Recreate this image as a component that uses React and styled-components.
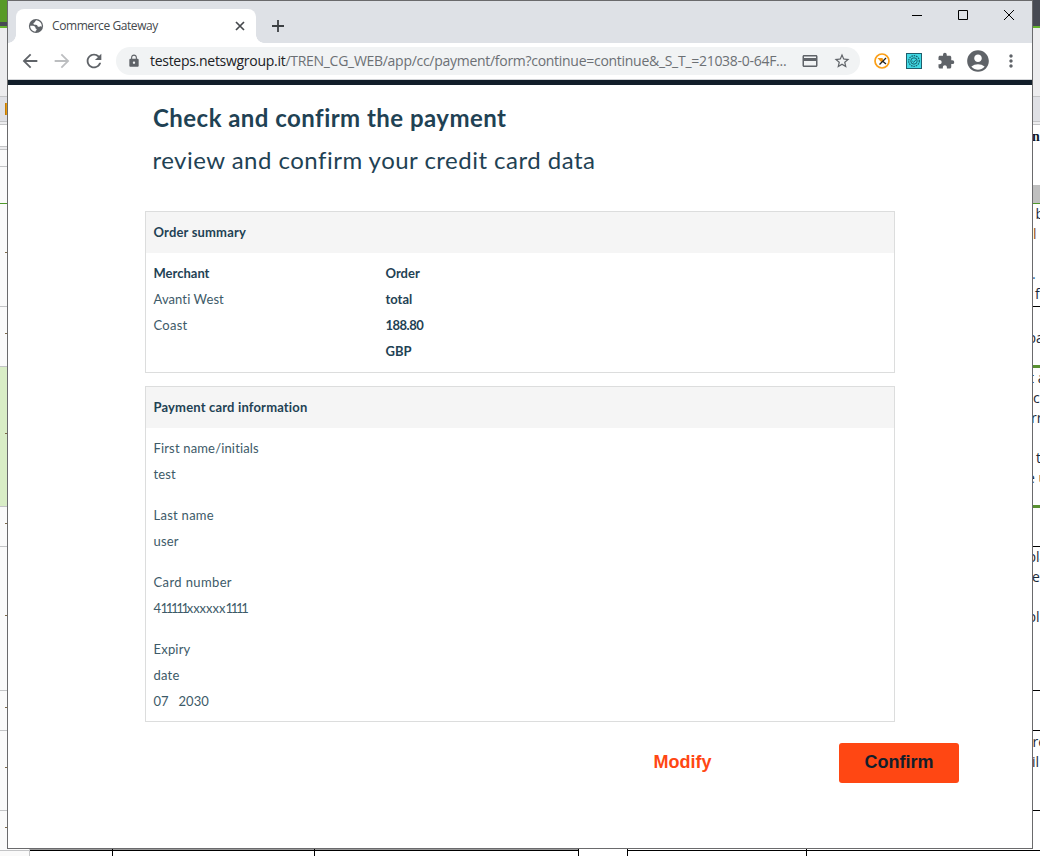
import React from "react";
import styled, { createGlobalStyle } from "styled-components";
import {
  MdArrowBack, MdArrowForward, MdRefresh, MdLock, MdOutlineCreditCard,
  MdStarBorder, MdExtension, MdAccountCircle, MdMoreVert,
} from "react-icons/md";

const GlobalStyle = createGlobalStyle`
  * { box-sizing: border-box; }
  body { margin: 0; background: #fff; overflow: hidden; }
  svg { display: block; flex: none; }
`;

const ui = `"Open Sans", "Noto Sans", sans-serif`;

const Desktop = styled.div`
  display: grid;
  grid-template-columns: 7px 1026px 7px;
  grid-template-rows: 849px 7px;
  width: 1040px;
  height: 856px;
  overflow: hidden;
`;

/* Spreadsheet behind the window */
const Strip = styled.div`
  display: flex;
  flex-direction: column;
  overflow: hidden;
`;
const Cell = styled.div`
  flex: none;
  height: ${(p) => p.$h}px;
  background: ${(p) => p.$bg || "#fff"};
  border-bottom: ${(p) => p.$line || "0 solid"};
  padding-top: ${(p) => p.$pt || 0}px;
  overflow: hidden;
`;
const CellLine = styled.div`
  height: 20px;
  font: ${(p) => p.$font || `14px/20px ${ui}`};
  color: ${(p) => p.$c || "#1b2a38"};
  white-space: pre;
  text-indent: ${(p) => p.$dx || 0}px;
`;
const Tick = styled.div`
  width: 2px;
  height: 1px;
  margin-left: 5px;
  background: #7d6a4a;
`;
const Flag = styled.div`
  width: 2px;
  height: 12px;
  margin-left: 5px;
  background: #e69a10;
  border-left: 1px solid #c27b05;
`;
const BottomRow = styled.div`
  grid-column: 1 / -1;
  display: flex;
  height: 7px;
`;
const BottomCell = styled.div`
  width: ${(p) => p.$w}px;
  flex: none;
  border-right: ${(p) => p.$edge || "1px solid #000"};
  background: linear-gradient(${(p) => p.$top || "#fff"} 1px, ${(p) => p.$line || "#000"} 1px 2px, ${(p) => p.$bg || "#fff"} 2px);
`;

/* Browser window */
const Window = styled.div`
  display: flex;
  flex-direction: column;
  border: 1px solid #6a6a6c;
  background: #fff;
`;
const TabStrip = styled.div`
  display: flex;
  height: 42px;
  padding: 8px 0 0;
  background: #dee1e6;
`;
const TabFoot = styled.div`
  width: 8px;
  height: 34px;
  background: ${(p) =>
    `radial-gradient(circle at ${p.$side === "left" ? "0 0" : "100% 0"}, transparent 7.5px, #fff 8px) 0 100% / 8px 8px no-repeat`};
`;
const Tab = styled.div`
  display: flex;
  align-items: center;
  width: 240px;
  height: 34px;
  padding: 0 10px 0 12px;
  border-radius: 8px 8px 0 0;
  background: #fff;
  color: #5f6368;
`;
const TabTitle = styled.span`
  flex: 1;
  margin-left: 8px;
  font: 12px/16px ${ui};
  letter-spacing: -0.42px;
  color: #45494d;
`;
const NewTab = styled.div`
  padding: 11px 0 0 8px;
`;
const WindowButtons = styled.div`
  display: flex;
  margin-left: auto;
  padding-right: 17px;
  gap: 35px;
`;
const Toolbar = styled.div`
  display: flex;
  align-items: center;
  height: 36px;
  padding: 0 11px 0 11px;
  background: #fff;
  color: #5f6368;
`;
const NavButton = styled.div`
  width: 22px;
  margin-right: 10px;
  color: ${(p) => (p.$off ? "#bcbec0" : "#5f6368")};
`;
const Address = styled.div`
  display: flex;
  align-items: center;
  width: 744px;
  height: 28px;
  margin-left: 1px;
  padding: 0 9px 0 11px;
  border-radius: 14px;
  background: #f1f3f4;
`;
const Url = styled.div`
  flex: 1;
  margin-left: 9px;
  white-space: nowrap;
  font: 14px/20px ${ui};
  letter-spacing: -0.285px;
  color: #6c7074;
  b { font-weight: 400; color: #202124; }
`;
const AddressIcons = styled.div`
  display: flex;
  gap: 14px;
`;
const Extensions = styled.div`
  display: flex;
  align-items: center;
  margin-left: 14px;
`;
const Slot = styled.div`
  margin-right: ${(p) => p.$mr || 0}px;
`;
const SiteBar = styled.div`
  height: 6px;
  border-top: 1px solid #d3d5d8;
  background: #121e2a;
`;

/* Payment page */
const Page = styled.main`
  flex: 1;
  padding: 16px 73px 0 137px;
  font-family: Lato, sans-serif;
  color: #1f4254;
`;
const Title = styled.h1`
  margin: 0 0 0 8px;
  font-size: 24px;
  line-height: 34px;
  font-weight: 700;
  letter-spacing: 0.46px;
`;
const Subtitle = styled.h2`
  margin: 8px 0 34px 7.5px;
  font-size: 24px;
  line-height: 34px;
  font-weight: 400;
  letter-spacing: 0.48px;
`;
const Panel = styled.section`
  width: 750px;
  height: ${(p) => p.$h}px;
  margin-bottom: 13px;
  border: 1px solid #dcdddd;
`;
const PanelHead = styled.h3`
  margin: 0;
  padding: 0 7.5px;
  height: 41px;
  background: #f5f5f5;
  font-size: 13px;
  line-height: 40px;
  font-weight: 700;
  letter-spacing: 0.17px;
`;
const Columns = styled.div`
  display: grid;
  grid-template-columns: 232px 1fr;
  padding: 7px 7.5px 0;
`;
const Fields = styled.div`
  display: flex;
  flex-direction: column;
  gap: 15px;
  padding: 7px 7.5px 0;
`;
const Line = styled.div`
  height: 26px;
  font-size: 13px;
  line-height: 26px;
  font-weight: ${(p) => (p.$bold ? 700 : 400)};
  letter-spacing: ${(p) => p.$ls || 0}px;
  color: ${(p) => (p.$bold ? "#1f4254" : "#3d5a68")};
  white-space: pre;
`;
const Run = styled.span`
  letter-spacing: ${(p) => p.$ls}px;
`;
const Actions = styled.div`
  display: flex;
  justify-content: flex-end;
  align-items: center;
  margin-top: 21px;
`;
const ActionButton = styled.button`
  width: 120px;
  height: 40px;
  padding: 0 0 2px;
  border: 0;
  border-radius: 3px;
  font: 700 18px/24px "Liberation Sans", Arial, sans-serif;
  background: ${(p) => (p.$primary ? "#ff4713" : "transparent")};
  color: ${(p) => (p.$primary ? "#121e2a" : "#ff4713")};
  margin-left: ${(p) => (p.$primary ? 96.5 : 0)}px;
`;

const GRAY = "1px solid #c3c4c6";
const BLACK = "1px solid #000";
const GREEN = "1px solid #4f9a2a";

const leftCells = [
  { h: 22, bg: "#589a27" },
  { h: 4, bg: "#474a53" },
  { h: 2, bg: "#65b32e" },
  { h: 69, bg: "#ececee", line: GRAY },
  { h: 25, bg: "#dfe0e5", line: GRAY, pt: 6, flag: true },
  { h: 3, bg: "#ececee", line: GRAY },
  { h: 22, line: GRAY },
  { h: 3, bg: "#ececee", line: GRAY },
  { h: 17, bg: "#fafafa", line: GRAY },
  { h: 37, bg: "#fafafa", line: GREEN },
  { h: 103, bg: "#fafafa", line: GRAY, pt: 48, tick: true },
  { h: 60, bg: "#fafafa", line: GRAY, pt: 26, tick: true },
  { h: 140, bg: "#d9edc6", line: GRAY, pt: 66, tick: true },
  { h: 40, bg: "#fafafa", line: GRAY, pt: 16, tick: true },
  { h: 144, bg: "#fafafa", line: GRAY, pt: 68, tick: true },
  { h: 40, bg: "#fafafa", line: GRAY, pt: 16, tick: true },
  { h: 80, bg: "#fafafa", line: GRAY, pt: 36, tick: true },
  { h: 38, bg: "#fafafa", pt: 16, tick: true },
];

const brown = "#8a4a16";
const rightCells = [
  { h: 26, bg: "#474a53" },
  { h: 2, bg: "#65b32e" },
  { h: 69, bg: "#ececee", line: GRAY },
  { h: 25, bg: "#dfe0e5", line: GRAY },
  { h: 3, bg: "#ececee", line: GRAY },
  { h: 60, pt: 2, lines: [["n", -1, "#101828", `700 14px/20px "Liberation Serif", serif`]] },
  { h: 19, bg: "#bfbfbf", line: GREEN },
  { h: 103, line: BLACK, lines: [["b", 2.5], ["l", 0, brown], [""], [".", -1, "#1f6296"], ["f", 2]] },
  { h: 58, pt: 21, lines: [["pa", -5.5]] },
  { h: 3, bg: "#5a9132" },
  { h: 137, lines: [["t a", -4], ["ic", -3.5], ["rr", -2], [""], ["t", 3], ["e u", -6]] },
  { h: 3, bg: "#5a9132" },
  { h: 39, line: BLACK },
  { h: 144, line: BLACK, lines: [["pla", -5.5], ["e", -1], [""], ["pl", -5.5]] },
  { h: 40, line: BLACK },
  { h: 80, line: BLACK, pt: 1, lines: [["re", -0.5], ["il", -1]] },
  { h: 38 },
];

/* each value is a list of runs: [text, letter spacing] */
const fields = [
  [[["First name/initials", 0.16]], [["test", 0.1]]],
  [[["Last name", 0.27]], [["user", 0.2]]],
  [[["Card number", 0.38]], [["4", -0.6], ["11111", -2.3], ["xxxxxx", 0], ["1111", -2.3]]],
  [[["Expiry", 0.2]], [["date", 0.2]], [["07   2030", 0]]],
];

function Cells({ cells }) {
  return (
    <Strip>
      {cells.map((c, i) => (
        <Cell key={i} $h={c.h} $bg={c.bg} $line={c.line} $pt={c.pt}>
          {c.flag && <Flag />}
          {c.tick && <Tick />}
          {c.lines?.map(([text, dx, color, font], j) => (
            <CellLine key={j} $dx={dx} $c={color} $font={font}>{text}</CellLine>
          ))}
        </Cell>
      ))}
    </Strip>
  );
}

export default function App() {
  return (
    <>
      <GlobalStyle />
      <Desktop>
        <Cells cells={leftCells} />
        <Window>
          <TabStrip>
            <TabFoot $side="left" />
            <Tab>
              <svg width="16" height="16" viewBox="0 0 16 16">
                <circle cx="8" cy="8" r="7.1" fill="#5f6368" />
                <path d="M8.6 2.3C6.8 3 7.6 4.2 6 4.8c-1.1.5-.6 1.8.6 1.9 1.7.1 2.7.1 2.9 1.2.2 1.1 1.7.9 2.5.5.8-.5 1.5-.1 1.7.5.5-2.900-1.400-5.700-5.100-6.600z" fill="#fff" />
                <path d="M2.2 7.8c1.700.1 3.700-.1 4.800.9.9.9.1 1.800 1.100 2.100 1.100.4.5 1.400-.3 1.900-.3.2-.3.700-.3 1C4.400 13.500 2.100 11 2.200 7.800z" fill="#fff" />
              </svg>
              <TabTitle>Commerce Gateway</TabTitle>
              <svg width="12" height="12" viewBox="0 0 12 12" stroke="#46494d" strokeWidth="1.7">
                <path d="M2 2l8 8M10 2l-8 8" />
              </svg>
            </Tab>
            <TabFoot $side="right" />
            <NewTab>
              <svg width="12" height="12" viewBox="0 0 12 12" stroke="#3c4043" strokeWidth="1.8">
                <path d="M6 0v12M0 6h12" />
              </svg>
            </NewTab>
            <WindowButtons>
              <svg width="11" height="11" viewBox="0 0 11 11" stroke="#000"><path d="M0 6.5h10" /></svg>
              <svg width="11" height="11" viewBox="0 0 11 11" stroke="#000" fill="none"><path d="M.5 1.5h9v9h-9z" /></svg>
              <svg width="11" height="11" viewBox="0 0 11 11" stroke="#000"><path d="M0 1l10 10M10 1L0 11" /></svg>
            </WindowButtons>
          </TabStrip>
          <Toolbar>
            <NavButton><MdArrowBack size={22} /></NavButton>
            <NavButton $off><MdArrowForward size={22} /></NavButton>
            <NavButton><MdRefresh size={22} /></NavButton>
            <Address>
              <MdLock size={14} />
              <Url>
                <b>testeps.netswgroup.it</b>/TREN_CG_WEB/app/cc/payment/form?continue=continue&amp;_S_T_=21038-0-64F...
              </Url>
              <AddressIcons>
                <MdOutlineCreditCard size={18} />
                <MdStarBorder size={18} />
              </AddressIcons>
            </Address>
            <Extensions>
              <Slot $mr={16}>
                <svg width="16" height="16" viewBox="0 0 16 16" fill="none">
                  <circle cx="8" cy="8" r="7" stroke="#fb9f17" strokeWidth="1.7" />
                  <path d="M3.5 5h5l1 3-2 1.500z" fill="#f3960f" />
                  <path d="M12 5L5.500 11.500M9 8.500l3 2.500" stroke="#222" strokeWidth="1.3" />
                </svg>
              </Slot>
              <Slot $mr={15}>
                <svg width="16" height="16" viewBox="0 0 16 16" fill="none">
                  <rect x=".5" y=".5" width="15" height="15" fill="#41d9e4" stroke="#1f5e6c" />
                  <circle cx="8" cy="8" r="5.3" stroke="#17606c" strokeWidth="1.2" strokeDasharray="1.6 .8" />
                  <circle cx="8" cy="8" r="3.2" stroke="#17606c" />
                  <path d="M6.3 8l1.4 1.3L10 6.7" stroke="#17606c" />
                </svg>
              </Slot>
              <Slot $mr={10}><MdExtension size={18} /></Slot>
              <Slot $mr={10}><MdAccountCircle size={26} /></Slot>
              <Slot><MdMoreVert size={20} /></Slot>
            </Extensions>
          </Toolbar>
          <SiteBar />
          <Page>
            <Title>Check and confirm the payment</Title>
            <Subtitle>review and confirm your credit card data</Subtitle>
            <Panel $h={162}>
              <PanelHead>Order summary</PanelHead>
              <Columns>
                <div>
                  <Line $bold>Merchant</Line>
                  <Line $ls={0.1}>Avanti West</Line>
                  <Line $ls={0.25}>Coast</Line>
                </div>
                <div>
                  <Line $bold>Order</Line>
                  <Line $bold>total</Line>
                  <Line $bold $ls={-0.5}>188.80</Line>
                  <Line $bold>GBP</Line>
                </div>
              </Columns>
            </Panel>
            <Panel $h={336}>
              <PanelHead>Payment card information</PanelHead>
              <Fields>
                {fields.map((group, i) => (
                  <div key={i}>
                    {group.map((runs, j) => (
                      <Line key={j}>
                        {runs.map(([text, ls], k) => <Run key={k} $ls={ls}>{text}</Run>)}
                      </Line>
                    ))}
                  </div>
                ))}
              </Fields>
            </Panel>
            <Actions>
              <ActionButton>Modify</ActionButton>
              <ActionButton $primary>Confirm</ActionButton>
            </Actions>
          </Page>
        </Window>
        <Cells cells={rightCells} />
        <BottomRow>
          <BottomCell $w={30} $bg="#fafafa" $top="#fafafa" $line="#c3c4c6" $edge="1px solid #c3c4c6" />
          <BottomCell $w={83} $top="#999" />
          <BottomCell $w={202} $top="#999" />
          <BottomCell $w={264} $top="#999" />
          <BottomCell $w={49} $line="#fff" />
          <BottomCell $w={179} />
          <BottomCell $w={233} $edge="0 solid" />
        </BottomRow>
      </Desktop>
    </>
  );
}
